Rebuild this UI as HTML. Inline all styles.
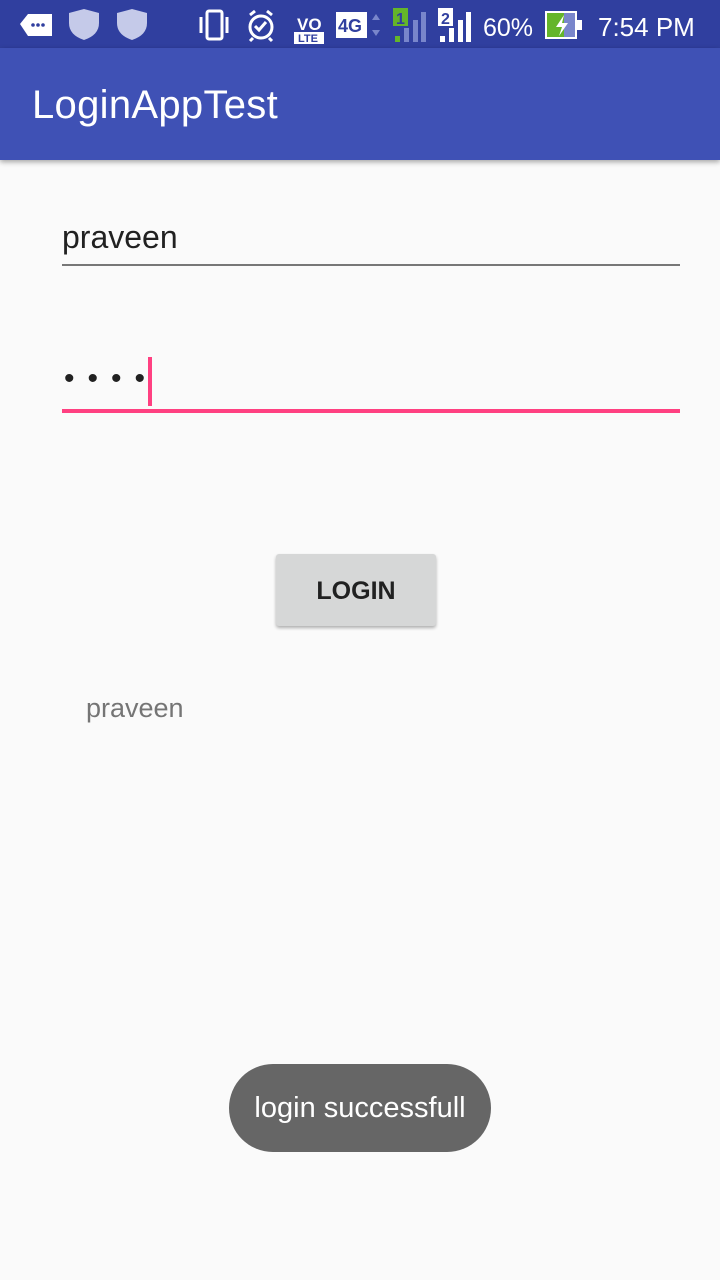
<!DOCTYPE html>
<html><head><meta charset="utf-8"><style>
body{margin:0;width:720px;height:1280px;background:#fafafa;font-family:"Liberation Sans",sans-serif;position:relative;overflow:hidden}
.sb{position:absolute;top:0;left:0;width:720px;height:48px;background:#303f9f;color:#fff}
.ab{position:absolute;top:48px;left:0;width:720px;height:112px;background:#3f51b5;box-shadow:0 2px 5px rgba(0,0,0,.35)}
.ab span{position:absolute;left:32px;top:35px;font-size:40px;color:#fff;letter-spacing:0.3px}
.abs{position:absolute}
</style></head><body>
<div class="sb">
<svg width="720" height="48" style="position:absolute;left:0;top:0">
<path d="M20 24 l8 -10 h24 v22 h-24 z" fill="#fff"/><circle cx="33" cy="25" r="1.8" fill="#303f9f"/><circle cx="38" cy="25" r="1.8" fill="#303f9f"/><circle cx="43" cy="25" r="1.8" fill="#303f9f"/>
<path d="M69 13 l15 -4 15 4 v10 q0 12 -15 17 q-15 -5 -15 -17z" fill="#c5cae9"/>
<path d="M117 13 l15 -4 15 4 v10 q0 12 -15 17 q-15 -5 -15 -17z" fill="#c5cae9"/>
<rect x="207" y="11" width="15" height="28" rx="2" fill="none" stroke="#fff" stroke-width="3"/>
<path d="M201 17v16M227 17v16" stroke="#fff" stroke-width="3"/>
<circle cx="261" cy="27" r="11" fill="none" stroke="#fff" stroke-width="3"/><path d="M255 26l4 4 7 -8" stroke="#fff" stroke-width="3" fill="none"/><path d="M250 15l5 -4M272 15l-5 -4M253 38l-3 3M269 38l3 3" stroke="#fff" stroke-width="3"/>
<text x="297" y="30" font-size="17" font-weight="bold" fill="#fff" font-family="Liberation Sans">VO</text>
<rect x="294" y="32" width="30" height="12" fill="#fff"/><text x="298" y="42" font-size="11" font-weight="bold" fill="#303f9f">LTE</text>
<rect x="336" y="12" width="31" height="26" fill="#fff"/><text x="338" y="32" font-size="18" font-weight="bold" fill="#303f9f">4G</text>
<path d="M372 20l4 -6 4 6zM372 30l4 6 4 -6z" fill="#7986cb"/>
<rect x="393" y="8" width="15" height="18" fill="#64b52a"/><text x="396" y="24" font-size="16" font-weight="bold" fill="#303f9f">1</text>
<rect x="395" y="36" width="5" height="6" fill="#64b52a"/><rect x="404" y="28" width="5" height="14" fill="#7986cb"/><rect x="413" y="20" width="5" height="22" fill="#7986cb"/><rect x="421" y="12" width="5" height="30" fill="#7986cb"/>
<rect x="438" y="8" width="15" height="18" fill="#fff"/><text x="441" y="24" font-size="16" font-weight="bold" fill="#303f9f">2</text>
<rect x="440" y="36" width="5" height="6" fill="#fff"/><rect x="449" y="28" width="5" height="14" fill="#fff"/><rect x="458" y="20" width="5" height="22" fill="#fff"/><rect x="466" y="12" width="5" height="30" fill="#fff"/>
<text x="483" y="36" font-size="25" fill="#fff">60%</text>
<rect x="546" y="12" width="30" height="26" fill="#7986cb" stroke="#fff" stroke-width="2"/><rect x="547" y="13" width="17" height="24" fill="#64b52a"/><rect x="577" y="20" width="5" height="10" fill="#fff"/>
<path d="M564 15l-8 12h6l-3 9 9 -13h-6z" fill="#fff"/>
<text x="598" y="36" font-size="26" fill="#fff">7:54 PM</text>
</svg></div>
<div class="ab"><span>LoginAppTest</span></div>
<div class="abs" style="left:62px;top:219px;font-size:32px;color:#212121">praveen</div>
<div class="abs" style="left:62px;top:264px;width:618px;height:2px;background:#777"></div>
<div class="abs" style="left:64px;top:362px;font-size:30px;color:#212121;letter-spacing:13px">••••</div>
<div class="abs" style="left:148px;top:357px;width:4px;height:49px;background:#ff4081"></div>
<div class="abs" style="left:62px;top:409px;width:618px;height:4px;background:#ff4081"></div>
<div class="abs" style="left:276px;top:554px;width:160px;height:72px;background:#d6d7d7;border-radius:3px;box-shadow:0 2px 3px rgba(0,0,0,.3);color:#212121;font-size:25px;font-weight:bold;text-align:center;line-height:74px">LOGIN</div>
<div class="abs" style="left:86px;top:693px;font-size:27px;color:#757575">praveen</div>
<div class="abs" style="left:229px;top:1064px;width:262px;height:88px;border-radius:44px;background:#666;color:#fff;font-size:29px;text-align:center;line-height:88px">login successfull</div>
</body></html>
